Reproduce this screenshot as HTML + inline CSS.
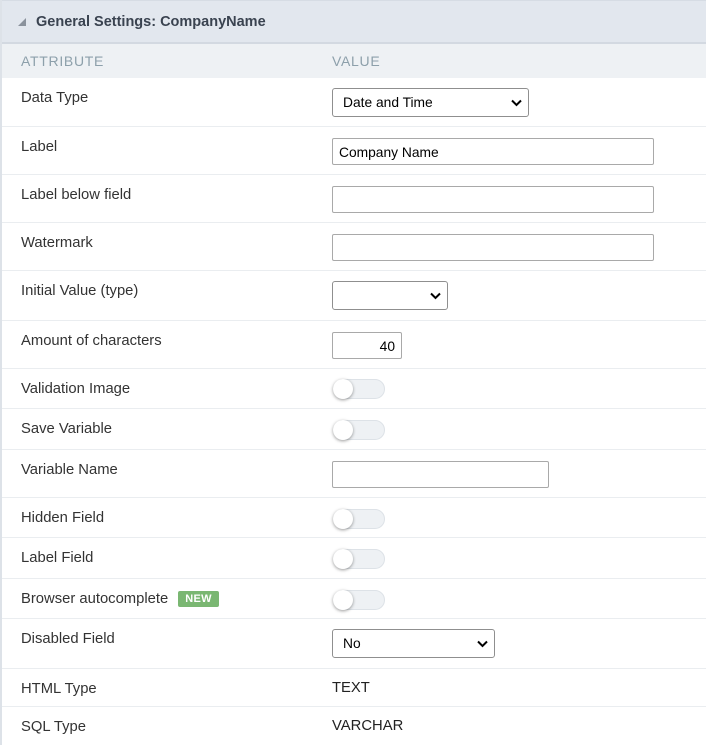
<!DOCTYPE html>
<html><head><style>
*{box-sizing:border-box;margin:0;padding:0}
body{width:706px;height:745px;overflow:hidden;background:#fff;font-family:"Liberation Sans",Arial,sans-serif;font-size:14.8px;color:#333;position:relative}
.lb{position:absolute;left:0;top:0;width:2px;height:745px;background:#dde2e8}
.hdr{position:absolute;left:2px;top:0;width:704px;height:44px;background:#e2e7ee;border-top:1px solid #d6dce4;border-bottom:2px solid #d3d9e1}
.hdr span{position:absolute;left:34px;top:13px;font-weight:bold;font-size:14.5px;color:#3a4350}
.tri{position:absolute;left:16px;top:17px;width:0;height:0;border-left:8px solid transparent;border-bottom:8px solid #8a929c}
.sub{position:absolute;left:2px;top:44px;width:704px;height:34px;background:#eef1f4;color:#8da0ab;font-size:14px;letter-spacing:.7px}
.sub b{position:absolute;top:9px;font-weight:normal}
.row{position:absolute;left:2px;width:704px;border-bottom:1px solid #eaedf0}
.row .a{position:absolute;left:19px;top:12px}
.v{position:absolute;left:330px}
.in{position:absolute;height:27px;border:1px solid #a9a9a9;border-radius:2px;background:#fff;font-size:13.8px;color:#000;padding:6px 0 0 6px}
.sel{position:absolute;height:29px;border:1px solid #8f8f8f;border-radius:3px;background:#fff;font-size:13.8px;color:#000;padding:6px 0 0 10px}
.sel svg{position:absolute;right:6px;top:10px}
.tg{position:absolute;width:52px;height:20px;border-radius:10px;background:#eef1f4;border:1px solid #dde2e7}
.tg i{position:absolute;left:-1px;top:-1px;width:20px;height:20px;border-radius:50%;background:#fff;box-shadow:0 1px 3px rgba(0,0,0,.4)}
.new{display:inline-block;background:#7ab772;color:#fff;font-size:11px;font-weight:bold;padding:2px 7px;border-radius:2px;margin-left:10px;vertical-align:1px;letter-spacing:.3px}
</style></head><body>
<div class="lb"></div>
<div class="hdr"><div class="tri"></div><span>General Settings: CompanyName</span></div>
<div class="sub"><b style="left:19px">ATTRIBUTE</b><b style="left:330px">VALUE</b></div>

<div class="row" style="top:78px;height:49px"><span class="a">Data Type</span>
<div class="sel" style="left:330px;top:10px;width:197px">Date and Time<svg width="11" height="8" viewBox="0 0 11 8"><path d="M1 1.5L5.5 6 10 1.5" stroke="#000" stroke-width="2" fill="none"/></svg></div></div>
<div class="row" style="top:127px;height:48px"><span class="a">Label</span>
<div class="in" style="left:330px;top:11px;width:322px">Company Name</div></div>
<div class="row" style="top:175px;height:48px"><span class="a">Label below field</span>
<div class="in" style="left:330px;top:11px;width:322px"></div></div>
<div class="row" style="top:223px;height:48px"><span class="a">Watermark</span>
<div class="in" style="left:330px;top:11px;width:322px"></div></div>
<div class="row" style="top:271px;height:50px"><span class="a">Initial Value (type)</span>
<div class="sel" style="left:330px;top:10px;width:116px"><svg width="11" height="8" viewBox="0 0 11 8"><path d="M1 1.5L5.5 6 10 1.5" stroke="#000" stroke-width="2" fill="none"/></svg></div></div>
<div class="row" style="top:321px;height:48px"><span class="a">Amount of characters</span>
<div class="in" style="left:330px;top:11px;width:70px;text-align:right;padding-right:6px">40</div></div>
<div class="row" style="top:369px;height:40px"><span class="a">Validation Image</span><div class="tg" style="left:331px;top:10px"><i></i></div></div>
<div class="row" style="top:409px;height:41px"><span class="a">Save Variable</span><div class="tg" style="left:331px;top:11px"><i></i></div></div>
<div class="row" style="top:450px;height:48px"><span class="a">Variable Name</span>
<div class="in" style="left:330px;top:11px;width:217px"></div></div>
<div class="row" style="top:498px;height:40px"><span class="a">Hidden Field</span><div class="tg" style="left:331px;top:11px"><i></i></div></div>
<div class="row" style="top:538px;height:41px"><span class="a">Label Field</span><div class="tg" style="left:331px;top:11px"><i></i></div></div>
<div class="row" style="top:579px;height:40px"><span class="a">Browser autocomplete<span class="new">NEW</span></span><div class="tg" style="left:331px;top:11px"><i></i></div></div>
<div class="row" style="top:619px;height:50px"><span class="a">Disabled Field</span>
<div class="sel" style="left:330px;top:10px;width:163px">No<svg width="11" height="8" viewBox="0 0 11 8"><path d="M1 1.5L5.5 6 10 1.5" stroke="#000" stroke-width="2" fill="none"/></svg></div></div>
<div class="row" style="top:669px;height:38px"><span class="a">HTML Type</span><span class="v" style="top:11px;color:#222">TEXT</span></div>
<div class="row" style="top:707px;height:38px;border:none"><span class="a">SQL Type</span><span class="v" style="top:11px;color:#222">VARCHAR</span></div>
</body></html>
